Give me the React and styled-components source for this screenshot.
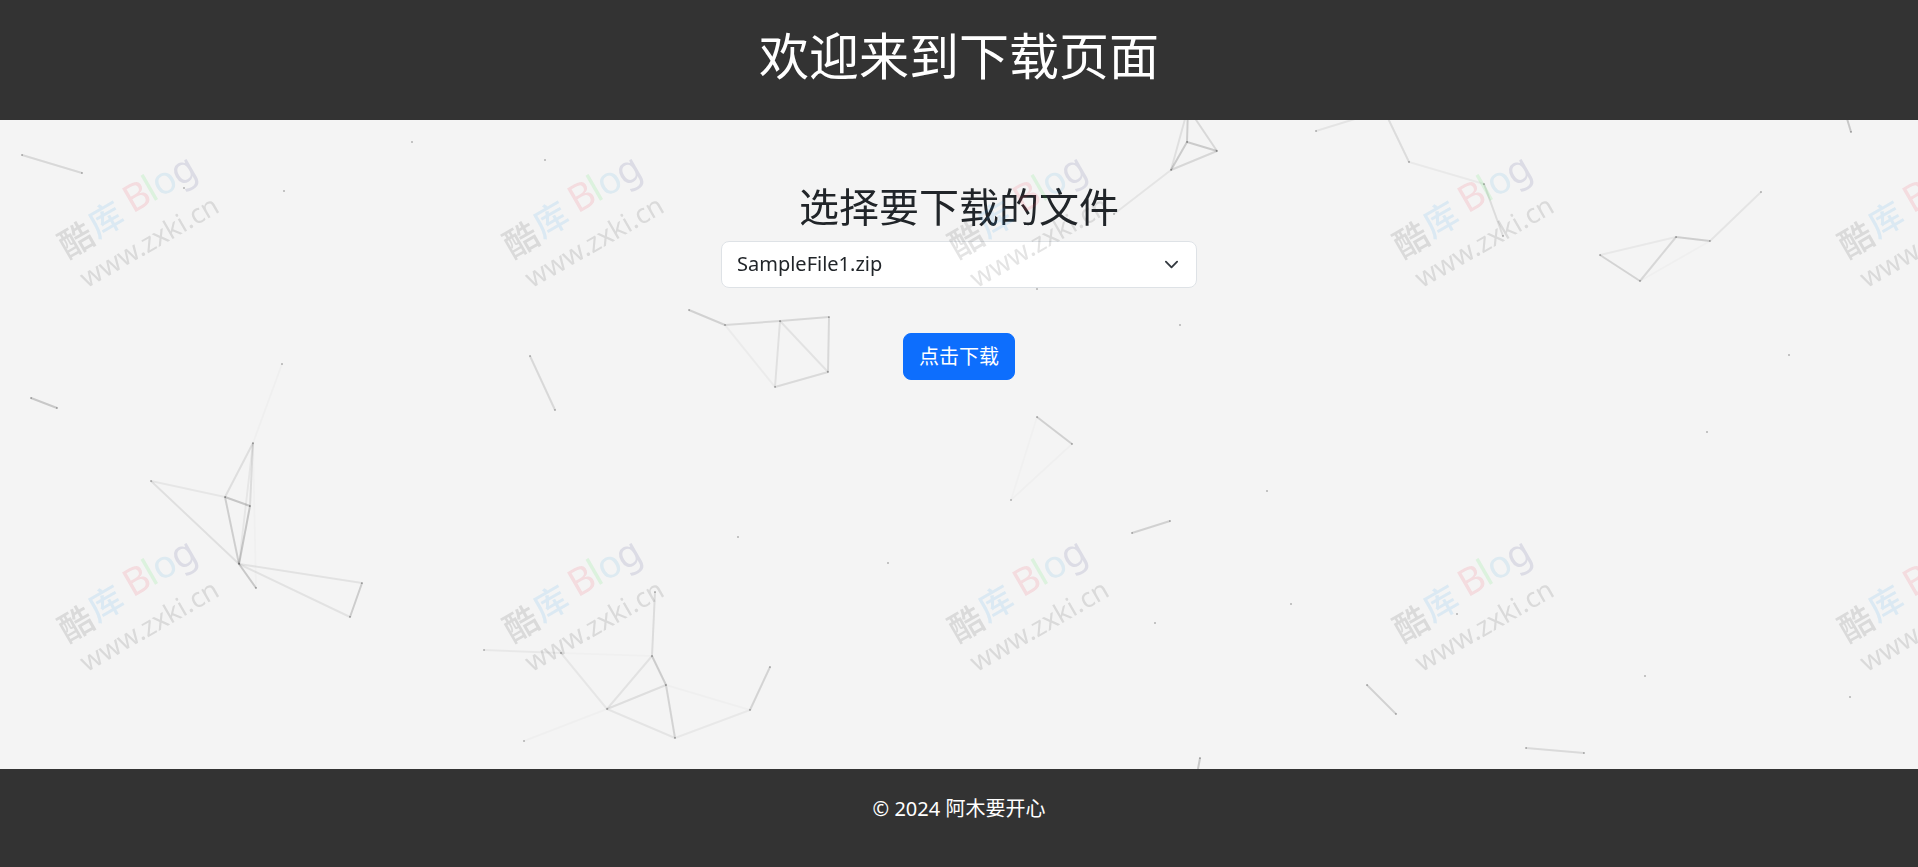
import React, { useState } from "react";
import styled, { createGlobalStyle } from "styled-components";

const GlobalStyle = createGlobalStyle`
  * {
    box-sizing: border-box;
  }
  body {
    margin: 0;
    font-family: "Noto Sans", "Noto Sans CJK SC", sans-serif;
    font-size: 20px;
    line-height: 30px;
    color: #212529;
    background: #f4f4f4;
  }
`;

const Page = styled.div`
  min-height: 100vh;
  display: flex;
  flex-direction: column;
`;

const Header = styled.header`
  position: relative;
  padding: 26px 25px 24px;
  text-align: center;
  color: #fff;
  background: #333;
`;

const Heading = styled.h1`
  margin: 0 0 10px;
  font-size: 50px;
  font-weight: 400;
  line-height: 60px;
`;

const Main = styled.main`
  position: relative;
  flex: 1;
  display: flex;
  flex-direction: column;
  align-items: center;
  padding: 63px 25px 25px;
`;

const SubHeading = styled.h2`
  margin: 0 0 10px;
  font-size: 40px;
  font-weight: 400;
  line-height: 48px;
`;

const FileSelect = styled.select`
  width: 476px;
  max-width: 100%;
  height: 47px;
  margin-bottom: 45px;
  padding: 6px 45px 8px 15px;
  appearance: none;
  font: inherit;
  color: inherit;
  border: 1px solid #dee2e6;
  border-radius: 8px;
  background: #fff
    url("data:image/svg+xml,%3csvg xmlns='http://www.w3.org/2000/svg' viewBox='0 0 16 16'%3e%3cpath fill='none' stroke='%23343a40' stroke-linecap='round' stroke-linejoin='round' stroke-width='2' d='m2 5 6 6 6-6'/%3e%3c/svg%3e")
    no-repeat right 17px center / 15px 15px;
`;

const DownloadButton = styled.button`
  height: 47px;
  padding: 0 15px;
  font: inherit;
  color: #fff;
  background: #0d6efd;
  border: 1px solid #0d6efd;
  border-radius: 8px;
  cursor: pointer;
  &:hover {
    background: #0b5ed7;
  }
`;

const Footer = styled.footer`
  position: relative;
  padding: 25px 25px 23px;
  text-align: center;
  color: #fff;
  background: #333;
`;

const Copyright = styled.p`
  margin: 0 0 20px;
`;

const Layer = styled.svg`
  position: fixed;
  top: 0;
  left: 0;
  width: 100%;
  height: 100%;
  pointer-events: none;
`;

// x1, y1, x2, y2, strength
const links = [
  [22, 155, 82, 173, 0.16],
  [31, 398, 57, 408, 0.26],
  [282, 364, 253, 443, 0.03],
  [530, 356, 555, 410, 0.16],
  [1188, 108, 1187, 142, 0.22],
  [1188, 108, 1171, 170, 0.12],
  [1188, 108, 1217, 151, 0.16],
  [1187, 142, 1217, 151, 0.24],
  [1187, 142, 1171, 170, 0.24],
  [1171, 170, 1217, 151, 0.17],
  [1171, 170, 1114, 214, 0.09],
  [1316, 131, 1384, 110, 0.09],
  [1384, 110, 1409, 162, 0.14],
  [1409, 162, 1484, 184, 0.06],
  [1484, 184, 1503, 236, 0.14],
  [1845, 112, 1851, 132, 0.26],
  [1600, 255, 1640, 281, 0.19],
  [1640, 281, 1676, 237, 0.17],
  [1676, 237, 1710, 241, 0.22],
  [1710, 241, 1761, 192, 0.09],
  [1600, 255, 1676, 237, 0.07],
  [1640, 281, 1710, 241, 0.03],
  [253, 443, 225, 497, 0.13],
  [253, 443, 250, 506, 0.14],
  [253, 443, 239, 564, 0.08],
  [225, 497, 250, 506, 0.27],
  [225, 497, 239, 564, 0.22],
  [250, 506, 239, 564, 0.27],
  [151, 481, 225, 497, 0.08],
  [151, 481, 239, 564, 0.12],
  [239, 564, 256, 588, 0.26],
  [253, 443, 256, 588, 0.02],
  [239, 564, 362, 583, 0.1],
  [239, 564, 350, 617, 0.1],
  [362, 583, 350, 617, 0.23],
  [484, 650, 561, 653, 0.07],
  [561, 653, 607, 709, 0.08],
  [561, 653, 652, 656, 0.02],
  [652, 656, 655, 592, 0.14],
  [652, 656, 666, 685, 0.23],
  [652, 656, 607, 709, 0.1],
  [607, 709, 666, 685, 0.13],
  [607, 709, 675, 738, 0.09],
  [666, 685, 675, 738, 0.19],
  [666, 685, 750, 710, 0.03],
  [675, 738, 750, 710, 0.07],
  [750, 710, 770, 667, 0.19],
  [607, 709, 524, 741, 0.03],
  [689, 310, 725, 325, 0.2],
  [725, 325, 780, 321, 0.16],
  [780, 321, 829, 317, 0.17],
  [829, 317, 828, 372, 0.16],
  [828, 372, 775, 387, 0.15],
  [780, 321, 775, 387, 0.11],
  [780, 321, 828, 372, 0.1],
  [725, 325, 775, 387, 0.05],
  [1037, 417, 1072, 444, 0.21],
  [1072, 444, 1011, 500, 0.03],
  [1037, 417, 1011, 500, 0.02],
  [1132, 533, 1170, 521, 0.2],
  [1367, 685, 1396, 714, 0.2],
  [1526, 748, 1584, 753, 0.15],
  [1200, 758, 1196, 780, 0.26],
];

const looseDots = [
  [412, 142], [284, 191], [545, 160], [184, 188], [1180, 325], [1789, 355],
  [738, 537], [888, 563], [1037, 289], [1291, 604], [1457, 614], [1645, 676],
  [1850, 697], [1707, 432], [1267, 491], [1155, 623],
];

const linkEnds = [
  ...new Set(links.flatMap(([x1, y1, x2, y2]) => [`${x1},${y1}`, `${x2},${y2}`])),
].map((key) => key.split(",").map(Number));

const dots = [...looseDots, ...linkEnds];

const Particles = () => (
  <Layer aria-hidden="true">
    {links.map(([x1, y1, x2, y2, strength]) => (
      <line
        key={`${x1}-${y1}-${x2}-${y2}`}
        x1={x1}
        y1={y1}
        x2={x2}
        y2={y2}
        stroke="#000"
        strokeWidth="2"
        strokeOpacity={strength * 0.7}
      />
    ))}
    {dots.map(([x, y]) => (
      <rect key={`${x}-${y}`} x={x - 1} y={y - 1} width="2" height="2" fillOpacity="0.2" />
    ))}
  </Layer>
);

const MarkText = styled.text`
  font-family: "Noto Sans", "Noto Sans CJK SC", sans-serif;
  font-size: ${({ $size }) => $size}px;
  font-weight: ${({ $weight }) => $weight || 400};
  fill: ${({ $fill }) => $fill};
`;

const TILE_WIDTH = 445;
const TILE_HEIGHT = 384;
const tiles = [0, 1].flatMap((row) =>
  [0, 1, 2, 3, 4].map((col) => [72 + col * TILE_WIDTH, 259 + row * TILE_HEIGHT])
);

const Watermark = () => (
  <Layer aria-hidden="true">
    {tiles.map(([x, y]) => (
      <g key={`${x}-${y}`} transform={`translate(${x} ${y}) rotate(-30)`} opacity="0.12">
        <MarkText x="-4" y="-2" $size={34} $weight={500} $fill="#222">酷</MarkText>
        <MarkText x="32" y="-5" $size={34} $weight={500} $fill="#2f9fe8">库</MarkText>
        <MarkText x="75" y="-9" $size={38} $fill="#f0304a">B</MarkText>
        <MarkText x="98" y="-9" $size={38} $fill="#35e040">l</MarkText>
        <MarkText x="107" y="-9" $size={38} $fill="#3aa5dc">o</MarkText>
        <MarkText x="129" y="-9" $size={38} $fill="#33337f">g</MarkText>
        <MarkText x="-2" y="33" $size={27} $fill="#222">www.zxki.cn</MarkText>
      </g>
    ))}
  </Layer>
);

const files = ["SampleFile1.zip", "SampleFile2.zip", "SampleFile3.zip"];

const App = () => {
  const [file, setFile] = useState(files[0]);

  return (
    <>
      <GlobalStyle />
      <Particles />
      <Page>
        <Header>
          <Heading>欢迎来到下载页面</Heading>
        </Header>
        <Main>
          <SubHeading>
            <label htmlFor="file">选择要下载的文件</label>
          </SubHeading>
          <FileSelect id="file" value={file} onChange={(e) => setFile(e.target.value)}>
            {files.map((name) => (
              <option key={name} value={name}>
                {name}
              </option>
            ))}
          </FileSelect>
          <DownloadButton type="button">点击下载</DownloadButton>
        </Main>
        <Footer>
          <Copyright>&copy; 2024 阿木要开心</Copyright>
        </Footer>
      </Page>
      <Watermark />
    </>
  );
};

export default App;
